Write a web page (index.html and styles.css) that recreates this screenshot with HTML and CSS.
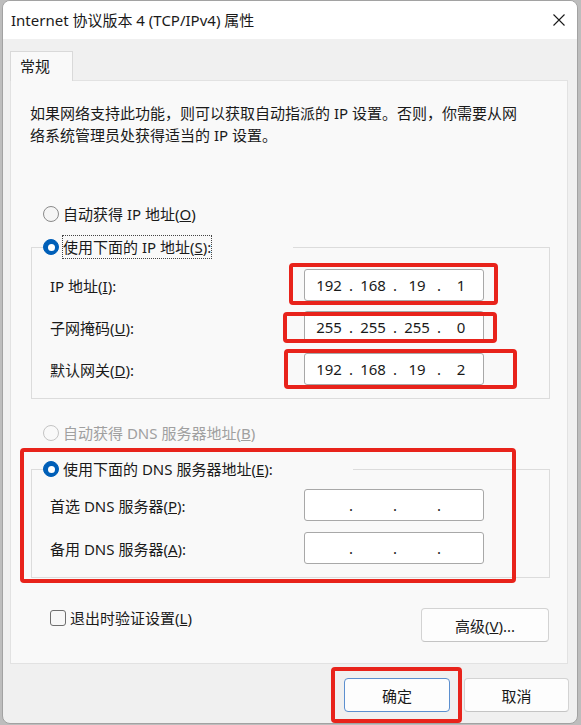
FILE: index.html
```html
<!DOCTYPE html>
<html lang="zh-CN">

<head>
    <meta charset="UTF-8">
    <title>Internet 协议版本 4 (TCP/IPv4) 属性</title>
    <link rel="stylesheet" href="styles.css">
</head>

<body>
    <div class="window">
        <div class="titlebar">
            <span class="title">Internet 协议版本 4 (TCP/IPv4) 属性</span>
            <svg class="close" width="12" height="12" viewBox="0 0 12 12">
                <path d="M0.5 0.5L11.5 11.5M11.5 0.5L0.5 11.5" stroke="#1a1a1a" stroke-width="1.1" fill="none" />
            </svg>
        </div>
        <div class="client">
            <div class="tab">常规</div>
            <div class="panel">
                <p class="desc">如果网络支持此功能，则可以获取自动指派的 IP 设置。否则，你需要从网<br>络系统管理员处获得适当的 IP 设置。</p>

                <div class="option first"><span class="radio"></span><span class="text">自动获得 IP 地址(<u>O</u>)</span></div>
                <fieldset class="group group-ip">
                    <legend class="legend-ip">
                        <div class="option"><span class="radio checked"></span><span class="text focus">使用下面的 IP 地址(<u>S</u>):</span></div>
                    </legend>
                    <div class="field">
                        <span>IP 地址(<u>I</u>):</span>
                        <div class="ipbox"><span class="oct">192</span><span class="dot">.</span><span class="oct">168</span><span class="dot">.</span><span class="oct">19</span><span class="dot">.</span><span class="oct">1</span></div>
                    </div>
                    <div class="field">
                        <span>子网掩码(<u>U</u>):</span>
                        <div class="ipbox"><span class="oct">255</span><span class="dot">.</span><span class="oct">255</span><span class="dot">.</span><span class="oct">255</span><span class="dot">.</span><span class="oct">0</span></div>
                    </div>
                    <div class="field">
                        <span>默认网关(<u>D</u>):</span>
                        <div class="ipbox"><span class="oct">192</span><span class="dot">.</span><span class="oct">168</span><span class="dot">.</span><span class="oct">19</span><span class="dot">.</span><span class="oct">2</span></div>
                    </div>
                </fieldset>

                <div class="option disabled dns-auto"><span class="radio"></span><span class="text">自动获得 DNS 服务器地址(<u>B</u>)</span></div>
                <fieldset class="group group-dns">
                    <legend class="legend-dns">
                        <div class="option"><span class="radio checked"></span><span class="text">使用下面的 DNS 服务器地址(<u>E</u>):</span></div>
                    </legend>
                    <div class="field">
                        <span>首选 DNS 服务器(<u>P</u>):</span>
                        <div class="ipbox"><span class="oct"></span><span class="dot">.</span><span class="oct"></span><span class="dot">.</span><span class="oct"></span><span class="dot">.</span><span class="oct"></span></div>
                    </div>
                    <div class="field">
                        <span>备用 DNS 服务器(<u>A</u>):</span>
                        <div class="ipbox"><span class="oct"></span><span class="dot">.</span><span class="oct"></span><span class="dot">.</span><span class="oct"></span><span class="dot">.</span><span class="oct"></span></div>
                    </div>
                </fieldset>

                <div class="bottom-row">
                    <div class="check-row"><span class="checkbox"></span><span>退出时验证设置(<u>L</u>)</span></div>
                    <button class="btn advanced">高级(<u>V</u>)...</button>
                </div>
            </div>
            <div class="actions">
                <button class="btn btn-default">确定</button>
                <button class="btn">取消</button>
            </div>
        </div>
    </div>

    <!-- red annotation marks drawn over the screenshot -->
    <div class="mark mark-ip"></div>
    <div class="mark mark-mask"></div>
    <div class="mark mark-gw"></div>
    <div class="mark mark-dns"></div>
    <div class="mark mark-ok"></div>
</body>

</html>
```

FILE: styles.css
```css
html {
    height: 100%;
}

body {
    margin: 0;
    background: #bdbdbd;
    font-family: "Noto Sans", "Noto Sans CJK SC", sans-serif;
    font-size: 15px;
    color: #1a1a1a;
}

.window {
    box-sizing: border-box;
    width: 576px;
    height: 724px;
    margin-left: 2px;
    border: 1px solid #a2a2a2;
    border-radius: 8px;
    overflow: hidden;
    background: #f0f0f0;
}

.titlebar {
    height: 38px;
    background: #ffffff;
    display: flex;
    align-items: center;
    justify-content: space-between;
    padding: 0 12px 0 8px;
}

.title {
    line-height: 20px;
}

.close {
    display: block;
}

.client {
    padding: 12px 9px 0 7px;
}

.tab {
    box-sizing: border-box;
    width: 63px;
    height: 30px;
    padding-left: 9px;
    line-height: 28px;
    background: #f9f9f9;
    border: 1px solid #d9d9d9;
    border-bottom: none;
    position: relative;
    z-index: 1;
    margin-bottom: -1px;
}

.panel {
    background: #f9f9f9;
    border: 1px solid #e2e2e2;
    padding: 21px 17px 21px 19px;
}

.desc {
    margin: 0;
    line-height: 22px;
}

.option {
    display: flex;
    align-items: center;
    line-height: 22px;
    white-space: nowrap;
}

.option.first {
    margin-top: 57px;
    padding-left: 13px;
}

.option.dns-auto {
    margin-top: 23px;
    padding-left: 13px;
}

.option .text {
    margin-left: 4px;
}

.option .focus {
    margin-left: 3px;
    border: 1px dotted #444;
}

.radio {
    box-sizing: border-box;
    width: 16px;
    height: 16px;
    border-radius: 50%;
    border: 1px solid #8a8a8a;
    background: #f5f5f5;
    display: flex;
    align-items: center;
    justify-content: center;
}

.radio.checked {
    border-color: #005fb8;
    background: #005fb8;
}

.radio.checked::after {
    content: "";
    width: 7px;
    height: 7px;
    border-radius: 50%;
    background: #ffffff;
}

.disabled {
    color: #a0a0a0;
}

.disabled .radio {
    border-color: #c4c4c4;
    background: #f9f9f9;
}

.group {
    margin: 0 0 0 1px;
    border: 1px solid #dcdcdc;
    padding: 10px 65px 13px 18px;
    min-width: 0;
}

.group-ip {
    margin-top: 10px;
}

.group-dns {
    margin-top: 13px;
    padding-top: 8px;
}

.group legend {
    padding: 0;
    margin-left: -7px;
    background: #f9f9f9;
}

.legend-ip {
    width: 250px;
}

.legend-dns {
    width: 310px;
}

.legend-ip .option {
    height: 24px;
}

.legend-dns .option {
    height: 24px;
}

.field {
    display: flex;
    align-items: center;
    justify-content: space-between;
    height: 32px;
    margin-top: 10px;
}

.group-dns .field {
    margin-top: 11px;
}

.field:first-of-type {
    margin-top: 0;
}

.ipbox {
    box-sizing: border-box;
    width: 180px;
    height: 32px;
    padding-left: 6px;
    background: #ffffff;
    border: 1px solid #a8a8a8;
    border-radius: 3px;
    display: flex;
    align-items: center;
}

.oct {
    width: 36px;
    text-align: center;
}

.dot {
    width: 8px;
    text-align: center;
}

.bottom-row {
    display: flex;
    justify-content: space-between;
    align-items: flex-start;
    margin-top: 29px;
    padding-left: 20px;
}

.check-row {
    display: flex;
    align-items: center;
    line-height: 22px;
}

.checkbox {
    box-sizing: border-box;
    width: 16px;
    height: 16px;
    border: 1px solid #6e6e6e;
    border-radius: 3px;
    background: #f7f7f7;
    margin-right: 4px;
}

.btn {
    box-sizing: border-box;
    height: 34px;
    font-family: inherit;
    font-size: 15px;
    color: #1a1a1a;
    background: #fdfdfd;
    border: 1px solid #d3d3d3;
    border-bottom-color: #c4c4c4;
    border-radius: 4px;
    padding: 0;
}

.advanced {
    width: 128px;
    margin-top: 1px;
    margin-right: 1px;
}

.actions {
    display: flex;
    justify-content: flex-end;
    gap: 14px;
    margin-top: 14px;
    margin-right: -1px;
}

.actions .btn {
    width: 105px;
}

.actions .btn-default {
    width: 106px;
    border-color: #5c8fcf;
}

.mark {
    position: absolute;
    box-sizing: border-box;
    border: 4px solid #e8231b;
    border-radius: 4px;
}

.mark-ip {
    left: 289px;
    top: 263px;
    width: 209px;
    height: 42px;
}

.mark-mask {
    left: 283px;
    top: 312px;
    width: 214px;
    height: 31px;
}

.mark-gw {
    left: 284px;
    top: 349px;
    width: 233px;
    height: 40px;
}

.mark-dns {
    left: 20px;
    top: 448px;
    width: 496px;
    height: 135px;
}

.mark-ok {
    left: 331px;
    top: 667px;
    width: 131px;
    height: 56px;
}
```
